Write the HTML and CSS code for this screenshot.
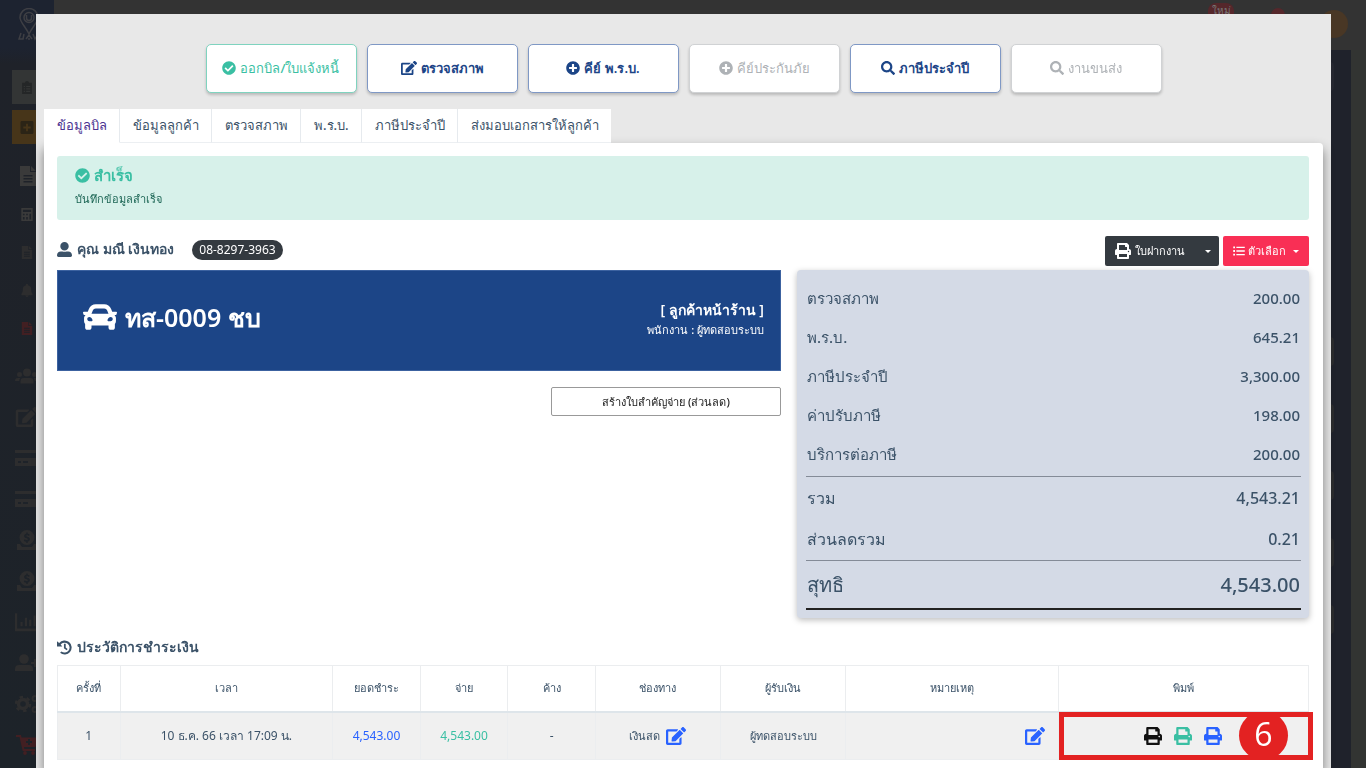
FILE: index.html
```html
<!DOCTYPE html>
<html lang="th">
<head>
<meta charset="utf-8">
<meta name="viewport" content="width=device-width, initial-scale=1">
<title>ข้อมูลบิล</title>
<link rel="stylesheet" href="styles.css">
</head>
<body>
<svg class="sprite" aria-hidden="true">
  <symbol id="check" viewBox="0 0 512 512"><path d="M504 256c0 136.967-111.033 248-248 248S8 392.967 8 256 119.033 8 256 8s248 111.033 248 248zM227.314 387.314l184-184c6.248-6.248 6.248-16.379 0-22.627l-22.627-22.627c-6.248-6.249-16.379-6.249-22.628 0L216 308.118l-70.059-70.059c-6.248-6.248-16.379-6.248-22.628 0l-22.627 22.627c-6.248 6.248-6.248 16.379 0 22.627l104 104c6.249 6.249 16.379 6.249 22.628.001z"/></symbol>
  <symbol id="edit" viewBox="0 0 576 512"><path d="M402.6 83.2l90.2 90.2c3.8 3.8 3.8 10 0 13.8L274.4 405.6l-92.8 10.3c-12.4 1.4-22.9-9.1-21.5-21.5l10.3-92.8L388.8 83.2c3.8-3.8 10-3.8 13.8 0zm162-22.9l-48.8-48.8c-15.2-15.2-39.9-15.2-55.2 0l-35.4 35.4c-3.8 3.8-3.8 10 0 13.8l90.2 90.2c3.8 3.8 10 3.8 13.8 0l35.4-35.4c15.2-15.3 15.2-40 0-55.2zM384 346.2V448H64V128h229.8c3.2 0 6.2-1.3 8.5-3.5l40-40c7.6-7.6 2.2-20.5-8.5-20.5H48C21.5 64 0 85.5 0 112v352c0 26.5 21.5 48 48 48h352c26.5 0 48-21.5 48-48V306.2c0-10.7-12.9-16-20.5-8.5l-40 40c-2.2 2.3-3.5 5.3-3.5 8.5z"/></symbol>
  <symbol id="plus" viewBox="0 0 512 512"><path d="M256 8C119 8 8 119 8 256s111 248 248 248 248-111 248-248S393 8 256 8zm144 276c0 6.6-5.4 12-12 12h-92v92c0 6.600-5.400 12-12 12h-56c-6.600 0-12-5.400-12-12v-92h-92c-6.600 0-12-5.400-12-12v-56c0-6.600 5.400-12 12-12h92v-92c0-6.600 5.400-12 12-12h56c6.600 0 12 5.400 12 12v92h92c6.600 0 12 5.400 12 12v56z"/></symbol>
  <symbol id="search" viewBox="0 0 512 512"><path d="M505 442.7L405.3 343c-4.5-4.500-10.600-7-17-7H372c27.600-35.300 44-79.700 44-128C416 93.100 322.900 0 208 0S0 93.100 0 208s93.100 208 208 208c48.300 0 92.700-16.400 128-44v16.300c0 6.400 2.500 12.500 7 17l99.700 99.700c9.400 9.400 24.600 9.400 33.900 0l28.300-28.300c9.400-9.400 9.400-24.600.1-34zM208 336c-70.700 0-128-57.200-128-128 0-70.700 57.200-128 128-128 70.700 0 128 57.200 128 128 0 70.700-57.200 128-128 128z"/></symbol>
  <symbol id="user" viewBox="0 0 512 512"><path d="M256 288c79.5 0 144-64.500 144-144S335.500 0 256 0 112 64.500 112 144s64.500 144 144 144zm128 32h-55.100c-22.200 10.200-46.900 16-72.900 16s-50.600-5.800-72.900-16H128C57.300 320 0 377.300 0 448v16c0 26.500 21.500 48 48 48h416c26.500 0 48-21.500 48-48v-16c0-70.700-57.300-128-128-128z"/></symbol>
  <symbol id="print" viewBox="0 0 512 512"><path d="M448 192V77.250c0-8.490-3.370-16.620-9.370-22.630L393.370 9.370c-6-6-14.140-9.370-22.630-9.370H96C78.330 0 64 14.330 64 32v160c-35.350 0-64 28.650-64 64v112c0 8.840 7.160 16 16 16h48v96c0 17.670 14.330 32 32 32h320c17.670 0 32-14.330 32-32v-96h48c8.840 0 16-7.160 16-16V256c0-35.350-28.650-64-64-64zm-64 256H128v-96h256v96zm0-224H128V64h192v48c0 8.840 7.160 16 16 16h48v96zm48 72c-13.250 0-24-10.750-24-24 0-13.260 10.750-24 24-24s24 10.740 24 24c0 13.250-10.750 24-24 24z"/></symbol>
  <symbol id="list" viewBox="0 0 512 512"><path d="M10 64h76v76H10zM10 218h76v76H10zM10 372h76v76H10zM144 72h358v58H144zM144 227h358v58H144zM144 381h358v58H144z"/></symbol>
  <symbol id="car" viewBox="0 0 512 512"><path d="M499.990 176h-59.870l-16.640-41.600C406.380 91.630 365.570 64 319.500 64h-127c-46.060 0-86.880 27.630-103.990 70.400L71.870 176H12.010C4.200 176-1.530 183.340.37 190.910l6 24C7.700 220.250 12.500 224 18.010 224h20.070C24.650 235.730 16 252.780 16 272v48c0 16.120 6.160 30.670 16 41.930V416c0 17.670 14.330 32 32 32h32c17.670 0 32-14.330 32-32v-32h256v32c0 17.670 14.330 32 32 32h32c17.670 0 32-14.330 32-32v-54.070c9.840-11.250 16-25.800 16-41.930v-48c0-19.220-8.650-36.270-22.070-48H494c5.510 0 10.310-3.750 11.640-9.090l6-24c1.890-7.570-3.840-14.910-11.650-14.910zm-352.060-17.830c7.290-18.220 24.940-30.170 44.570-30.170h127c19.630 0 37.280 11.950 44.570 30.170L384 208H128l19.930-49.830zM96 319.800c-19.200 0-32-12.760-32-31.900S76.800 256 96 256s48 28.710 48 47.850-28.800 15.950-48 15.950zm320 0c-19.200 0-48 3.190-48-15.950S396.800 256 416 256s32 12.760 32 31.900-12.800 31.900-32 31.900z"/></symbol>
  <symbol id="history" viewBox="0 0 16 16"><path d="M0 1.200v5.600h5.600L3.900 4.900A5.300 5.300 0 1 1 4.700 12.200l-1.400 1.500A7.500 7.500 0 1 0 2.300 3.200zM7.400 4v4.700l2.900 2.200 1-1.400-2-1.500V4z"/></symbol>
  <symbol id="doc" viewBox="0 0 16 20"><path fill-rule="evenodd" d="M0 0h10v6h6v14H0zM11 0l5 5h-5zM3.500 9v1.500h9V9zm0 3v1.500h9V12zm0 3v1.500h9V15z"/></symbol>
  <symbol id="clip" viewBox="0 0 12 16"><path fill-rule="evenodd" d="M0 2h3.500a2.500 2 0 0 1 5 0H12v14H0zM2 6v1.500h1.500V6zm3 0v1.500h5V6zM2 9v1.500h1.500V9zm3 0v1.500h5V9zM2 12v1.500h1.500V12zm3 0v1.500h5V12z"/></symbol>
  <symbol id="plusbox" viewBox="0 0 14 14"><path fill-rule="evenodd" d="M1 0h12l1 1v12l-1 1H1l-1-1V1zM6 3v3H3v2h3v3h2V8h3V6H8V3z"/></symbol>
  <symbol id="calc" viewBox="0 0 14 16"><path fill-rule="evenodd" d="M0 0h14v16H0zM2 2v3h10V2zm0 5v2h2V7zm4 0v2h2V7zm4 0v7h2V7zM2 11v3h2v-3zm4 0v3h2v-3z"/></symbol>
  <symbol id="bell" viewBox="0 0 12 14"><path d="M5 0h2v1.300c2.300.4 3.500 2 3.500 4.200 0 3 .5 4 1.500 5V12H0v-1.500c1-1 1.500-2 1.500-5 0-2.200 1.200-3.800 3.500-4.200zM4.300 12.500h3.400a1.700 1.500 0 0 1-3.400 0z"/></symbol>
  <symbol id="group" viewBox="0 0 24 16"><circle cx="12" cy="4.500" r="4"/><circle cx="4.500" cy="6.500" r="2.500"/><circle cx="19.500" cy="6.500" r="2.500"/><path d="M5.500 15.500v-2.500q0-3 3-3h7q3 0 3 3v2.500zM0 13q0-3 2.500-3h2.800q-1 1-1 3zM24 13q0-3-2.500-3h-2.800q1 1 1 3z"/></symbol>
  <symbol id="card" viewBox="0 0 24 18"><path fill-rule="evenodd" d="M0 1h24v3H0zM0 9h24v8H0zM3 12v2h3v-2zm5 0v2h5v-2z"/></symbol>
  <symbol id="donate" viewBox="0 0 20 20"><path fill-rule="evenodd" d="M10 0a7.500 7.500 0 1 1 0 15 7.500 7.500 0 0 1 0-15zM9.300 2.500v1.300C6.500 4.200 6.600 7.500 9 8c2.500.5 2 2 1 2S8 9.700 7.500 9.300L6.800 10.800q1 .8 2.500 1v1.200h1.400v-1.300c3-.6 2.800-4 .3-4.600C8.700 6.500 9 5.300 10 5.300s1.500.3 2 .7l.7-1.500q-.8-.6-2-.7V2.500z"/><path d="M0 14h3l2 3h10l2-3h3v6H0z"/></symbol>
  <symbol id="chart" viewBox="0 0 22 18"><path d="M0 1h2v14h20v2.500H0zM5 9h2v4H5zM9 5h2v8H9zM13 7h2v6h-2zM17 3h2v10h-2z"/></symbol>
  <symbol id="useradd" viewBox="0 0 24 18"><circle cx="9" cy="5" r="4.800"/><path d="M0 17v-2q0-4 4-4h10q4 0 4 4v2zM19 5h2v3h3v2h-3v3h-2v-3h-3V8h3z"/></symbol>
  <symbol id="gear" viewBox="0 0 24 20"><g fill="none" stroke="currentColor"><circle cx="8" cy="10" r="4.500" stroke-width="3.500"/><circle cx="8" cy="10" r="7" stroke-width="2.500" stroke-dasharray="3.500 3.830"/><circle cx="20" cy="4.500" r="2.500" stroke-width="2"/><circle cx="20" cy="15.500" r="2.500" stroke-width="2"/></g></symbol>
  <symbol id="cart" viewBox="0 0 22 20"><path fill-rule="evenodd" d="M0 0h5l.6 2.500H22L19.500 12H8l.4 2H19v2H6.700L3.500 2H0zM12 4v2h-2v2h2v2h2V8h2V6h-2V4z"/><circle cx="9" cy="18" r="1.900"/><circle cx="17" cy="18" r="1.900"/></symbol>
  <symbol id="pin" viewBox="0 0 22 32"><path fill="none" stroke="currentColor" stroke-width="1.500" d="M11 25C7 17 2 13 2 8.500a8.500 8.500 0 0 1 18 0C20 13 15 17 11 25zM11 3.500a5 5 0 1 1 0 10 5 5 0 0 1 0-10M8.500 6v3a2.500 2.500 0 0 0 5 0V6M3 24l-2 6h4l1-5M8 30l3-4 3 4M15 25l2 5 3-5 1 5M10 30h2"/></symbol>
</svg>

<div class="backdrop" aria-hidden="true">
  <div class="side">
    <svg class="logo"><use href="#pin"/></svg>
    <div class="tile grey"><svg class="s"><use href="#clip"/></svg></div>
    <div class="tile gold"><svg class="s"><use href="#plusbox"/></svg></div>
    <div class="menu small">
      <svg class="m lit"><use href="#doc"/></svg>
      <svg class="s lit"><use href="#calc"/></svg>
      <svg class="s"><use href="#doc"/></svg>
      <svg class="s"><use href="#bell"/></svg>
      <svg class="s red"><use href="#doc"/></svg>
    </div>
    <div class="menu large">
      <svg><use href="#group"/></svg>
      <svg><use href="#edit"/></svg>
      <svg><use href="#card"/></svg>
      <svg><use href="#card"/></svg>
      <svg><use href="#donate"/></svg>
      <svg><use href="#donate"/></svg>
      <svg><use href="#chart"/></svg>
      <svg><use href="#useradd"/></svg>
      <svg><use href="#gear"/></svg>
      <svg class="red"><use href="#cart"/></svg>
    </div>
  </div>
  <div class="behind">
    <div class="topbar"><span class="new">ใหม่</span><span class="dot"></span><span class="avatar"></span></div>
    <div class="page"><i class="first"></i><i></i><i></i><i></i><i></i><i></i></div>
  </div>
</div>

<main class="modal">
  <div class="actions">
    <button type="button" class="act green"><svg class="i14"><use href="#check"/></svg>ออกบิล/ใบแจ้งหนี้</button>
    <button type="button" class="act"><svg class="i16"><use href="#edit"/></svg>ตรวจสภาพ</button>
    <button type="button" class="act"><svg class="i14"><use href="#plus"/></svg>คีย์ พ.ร.บ.</button>
    <button type="button" class="act off" disabled><svg class="i14"><use href="#plus"/></svg>คีย์ประกันภัย</button>
    <button type="button" class="act"><svg class="i14"><use href="#search"/></svg>ภาษีประจำปี</button>
    <button type="button" class="act off" disabled><svg class="i14"><use href="#search"/></svg>งานขนส่ง</button>
  </div>

  <nav class="tabs">
    <a href="#bill" class="on">ข้อมูลบิล</a><a href="#customer">ข้อมูลลูกค้า</a><a href="#inspect">ตรวจสภาพ</a><a href="#prb">พ.ร.บ.</a><a href="#tax">ภาษีประจำปี</a><a href="#deliver">ส่งมอบเอกสารให้ลูกค้า</a>
  </nav>

  <section class="card" id="bill">
    <div class="alert" role="status">
      <strong><svg class="i15"><use href="#check"/></svg>สำเร็จ</strong>
      <span>บันทึกข้อมูลสำเร็จ</span>
    </div>

    <div class="who">
      <h2><svg class="i15"><use href="#user"/></svg>คุณ มณี เงินทอง</h2>
      <span class="phone">08-8297-3963</span>
      <div class="tools">
        <div class="split">
          <button type="button"><svg class="i16"><use href="#print"/></svg>ใบฝากงาน</button><button type="button" class="more" aria-label="เพิ่มเติม"><i class="caret"></i></button>
        </div>
        <button type="button" class="options"><svg class="i12"><use href="#list"/></svg>ตัวเลือก<i class="caret"></i></button>
      </div>
    </div>

    <div class="cols">
      <div class="left">
        <div class="plate">
          <h1><svg class="i34"><use href="#car"/></svg>ทส-0009 ชบ</h1>
          <p><b>[ ลูกค้าหน้าร้าน ]</b><span>พนักงาน : ผู้ทดสอบระบบ</span></p>
        </div>
        <button type="button" class="voucher">สร้างใบสำคัญจ่าย (ส่วนลด)</button>
      </div>
      <dl class="sum">
        <div><dt>ตรวจสภาพ</dt><dd>200.00</dd></div>
        <div><dt>พ.ร.บ.</dt><dd>645.21</dd></div>
        <div><dt>ภาษีประจำปี</dt><dd>3,300.00</dd></div>
        <div><dt>ค่าปรับภาษี</dt><dd>198.00</dd></div>
        <div><dt>บริการต่อภาษี</dt><dd>200.00</dd></div>
        <div class="sub total"><dt>รวม</dt><dd>4,543.21</dd></div>
        <div class="sub"><dt>ส่วนลดรวม</dt><dd>0.21</dd></div>
        <div class="net"><dt>สุทธิ</dt><dd>4,543.00</dd></div>
      </dl>
    </div>

    <h3><svg class="i15"><use href="#history"/></svg>ประวัติการชำระเงิน</h3>
    <table>
      <colgroup><col class="w5"><col class="w17"><col class="w7"><col class="w7"><col class="w7"><col class="w10"><col class="w10"><col class="w17"><col class="w20"></colgroup>
      <thead><tr><th>ครั้งที่</th><th>เวลา</th><th>ยอดชำระ</th><th>จ่าย</th><th>ค้าง</th><th>ช่องทาง</th><th>ผู้รับเงิน</th><th>หมายเหตุ</th><th>พิมพ์</th></tr></thead>
      <tbody><tr>
        <td>1</td><td>10 ธ.ค. 66 เวลา 17:09 น.</td><td class="blue">4,543.00</td><td class="teal">4,543.00</td><td>-</td>
        <td class="thai"><div class="mid">เงินสด <button type="button" class="ico blue" aria-label="แก้ไขช่องทาง"><svg class="i20"><use href="#edit"/></svg></button></div></td>
        <td class="thai">ผู้ทดสอบระบบ</td>
        <td><div class="end"><button type="button" class="ico blue" aria-label="แก้ไขหมายเหตุ"><svg class="i20"><use href="#edit"/></svg></button></div></td>
        <td class="marked"><div class="mid prints"><button type="button" class="ico black" aria-label="พิมพ์ 1"><svg class="i18"><use href="#print"/></svg></button><button type="button" class="ico teal" aria-label="พิมพ์ 2"><svg class="i18"><use href="#print"/></svg></button><button type="button" class="ico blue" aria-label="พิมพ์ 3"><svg class="i18"><use href="#print"/></svg></button></div><div class="mark"><span>6</span></div></td>
      </tr></tbody>
    </table>
  </section>
</main>
</body>
</html>
```
FILE: styles.css
```css
* { box-sizing: border-box; }
body {
  margin: 0;
  background: #333;
  color: #3b5268;
  font: 13px/20px "Noto Sans", sans-serif;
}
h1, h2, h3, p, dl, dd { margin: 0; }
button { font: inherit; cursor: pointer; }
svg { display: block; flex: none; fill: currentColor; }
.sprite { position: absolute; width: 0; height: 0; }
.i12 { width: 12px; height: 12px; }
.i14 { width: 14px; height: 14px; }
.i15 { width: 15px; height: 15px; }
.i16 { width: 16px; height: 16px; }
.i18 { width: 18px; height: 18px; }
.i20 { width: 20px; height: 18px; }
.i34 { width: 34px; height: 34px; }

/* dimmed page behind the dialog */
.backdrop {
  position: fixed;
  inset: 0;
  z-index: -1;
  display: flex;
  overflow: hidden;
}
.side {
  width: 54px;
  background: linear-gradient(#1d2330 0, #1d2330 48px, #1f2229 64px, #1d2329 100%);
  color: #2d2d2e;
}
.logo { width: 22px; height: 34px; margin: 8px 0 28px 18px; color: #3e3f44; }
.tile {
  display: flex;
  align-items: center;
  height: 34px;
  margin: 0 0 6px 12px;
  padding-left: 8px;
}
.tile.grey { background: #333535; color: #242627; }
.tile.gold { background: #473519; color: #2b2416; }
.s { width: 14px; height: 13px; }
.menu { display: grid; align-items: center; }
.small { grid-auto-rows: 38px; padding: 7px 0 8px 20px; }
.small .m { width: 16px; height: 20px; }
.small .lit { color: #3a3a3a; }
.large { grid-auto-rows: 41px; padding-left: 15px; }
.large svg { width: 24px; height: 20px; }
.menu .red { color: #421f22; }
.behind { flex: 1; background: #323432; }
.topbar { display: flex; align-items: flex-start; justify-content: flex-end; height: 50px; padding-right: 18px; background: #333; }
.new { width: 26px; height: 20px; margin-top: 3px; border-radius: 8px; background: #55272b; color: #777; font-size: 10px; line-height: 15px; text-align: center; }
.dot { width: 14px; height: 14px; margin: 8px 35px 0 37px; border-radius: 50%; background: #55272b; }
.avatar { width: 28px; height: 28px; margin-top: 10px; border-radius: 50%; background: #493725; }
.page { display: grid; justify-items: end; align-content: start; height: 100%; margin-right: 15px; padding: 12px 17px 0 0; background: #1f222b; row-gap: 16px; }
.page i { width: 24px; height: 29px; border-radius: 4px; background: #2a2b2d; }
.page { row-gap: 38px; }
.page .first { margin-bottom: 208px; background: #252730; }

/* dialog */
.modal {
  display: flex;
  flex-direction: column;
  min-height: calc(100vh - 14px);
  margin: 14px 35px 0 36px;
  padding: 30px 8px 0;
  background: #e8e8e8;
}
.actions { display: flex; justify-content: center; gap: 10px; margin-bottom: 16px; }
.act {
  display: flex;
  align-items: center;
  justify-content: center;
  gap: 4px;
  width: 151px;
  height: 49px;
  padding: 0 0 2px;
  border: 1px solid #7f98c5;
  border-radius: 5px;
  background: #fff;
  box-shadow: 0 2px 3px #0003;
  color: #1c4587;
  font-weight: 600;
}
.act.green { border-color: #7fd3bf; color: #3abfa3; font-weight: 500; }
.act.off { border-color: #d0d2d4; color: #aeb2b6; font-weight: 500; }
.tabs { display: flex; position: relative; z-index: 1; }
.tabs a {
  padding: 6px 12px 7px 13px;
  border-right: 1px solid #e6eaee;
  border-bottom: 1px solid #eceff2;
  background: #fff;
  color: #3b5268;
  font-weight: 500;
  text-decoration: none;
}
.tabs .on { color: #4c3391; border-bottom-color: #fff; }
.tabs a:last-child { border-right: 0; }
.card {
  flex: 1;
  padding: 13px 14px 9px 13px;
  border-radius: 0 4px 0 0;
  background: #fff;
  box-shadow: 0 6px 12px #0007;
}
.alert { height: 64px; padding: 8px 18px; border-radius: 3px; background: #d7f1ea; color: #1e6756; font-size: 11px; font-weight: 500; }
.alert strong { display: flex; align-items: center; gap: 4px; height: 22px; color: #3abfa3; font-size: 15px; }
.alert span { display: block; line-height: 26px; }
.who { display: flex; align-items: center; height: 30px; margin: 16px 0 4px; }
h2, h3 { display: flex; align-items: center; gap: 5px; font-size: 14px; line-height: 24px; font-weight: 600; }
h2 { padding-bottom: 4px; }
.phone { margin-left: 18px; padding: 0 7px; border-radius: 10px; background: #343a40; color: #fff; font-size: 12px; }
.who .phone { margin-bottom: 2px; }
.tools { display: flex; gap: 4px; height: 30px; margin-left: auto; color: #fff; font-size: 11px; font-weight: 500; }
.tools button { display: flex; align-items: center; gap: 4px; height: 30px; padding: 0 12px 0 10px; border: 0; background: #343a40; color: #fff; }
.split { display: flex; border-radius: 2px; overflow: hidden; }
.tools .more { padding: 0 8px; }
.tools .options { gap: 3px; padding: 0 10px; border-radius: 2px; background: #f92f55; }
.caret { border: 3px solid transparent; border-top-color: #fff; border-bottom: 0; }
.options .caret { margin-left: 4px; }
.cols { display: grid; grid-template-columns: 724fr 512fr; gap: 16px; }
.plate { display: flex; align-items: center; justify-content: space-between; height: 101px; padding: 0 16px 2px 25px; border: 1px solid #3c62a0; background: #1c4587; color: #fff; }
h1 { display: flex; align-items: center; gap: 8px; padding-bottom: 6px; font-size: 25px; line-height: 32px; font-weight: 600; }
.plate p { display: grid; text-align: right; font-size: 11px; font-weight: 500; }
.plate b { font-size: 14px; font-weight: 600; }
.voucher { display: block; width: 230px; height: 29px; margin: 16px 0 0 auto; padding: 0; border: 1px solid #999; border-radius: 2px; background: #fff; color: #222; font-size: 11px; font-weight: 500; }
.sum { padding: 8px 8px 8px 9px; border-radius: 4px; background: #d4dae6; box-shadow: 0 2px 6px #0004; font-size: 15px; font-weight: 500; }
.sum div { display: flex; align-items: center; justify-content: space-between; height: 39px; padding: 0 1px; }
.sum .sub { height: 42px; font-size: 16px; }
.sum .total { margin-top: 3px; border-top: 1px solid #848b97; }
.sum .net { height: 50px; border-top: 1px solid #848b97; border-bottom: 2px solid #222; font-size: 20px; }
h3 { margin: 17px 0 6px; }
table { width: 100%; border-collapse: collapse; table-layout: fixed; font-size: 12px; text-align: center; }
th, td { height: 46px; padding: 0 6px; border: 1px solid #ebedef; font-weight: 500; }
th { border-bottom: 2px solid #dee5ea; font-size: 11px; }
td { height: 48px; background: #f0f0f0; font-weight: 400; }
.thai { font-size: 11px; font-weight: 500; }
.w5 { width: 5%; }
.w7 { width: 7%; }
.w10 { width: 10%; }
.w17 { width: 17%; }
.w20 { width: 20%; }
.blue { color: #2962ff; }
.teal { color: #3abfa3; }
.black { color: #111; }
.mid, .end { display: flex; align-items: center; justify-content: center; gap: 6px; }
.end { justify-content: flex-end; padding-right: 7px; }
.prints { gap: 12px; }
.ico { padding: 0; border: 0; background: none; }
.marked { position: relative; }
.mark {
  position: absolute;
  inset: -1px -5px -1px 0;
  display: flex;
  align-items: center;
  justify-content: flex-end;
  padding-right: 20px;
  overflow: hidden;
  border: 5px solid #e32222;
  pointer-events: none;
}
.mark span { flex: none; width: 49px; height: 49px; border-radius: 50%; background: #e32222; color: #fff; font: 32px/46px "Open Sans", sans-serif; }
```
